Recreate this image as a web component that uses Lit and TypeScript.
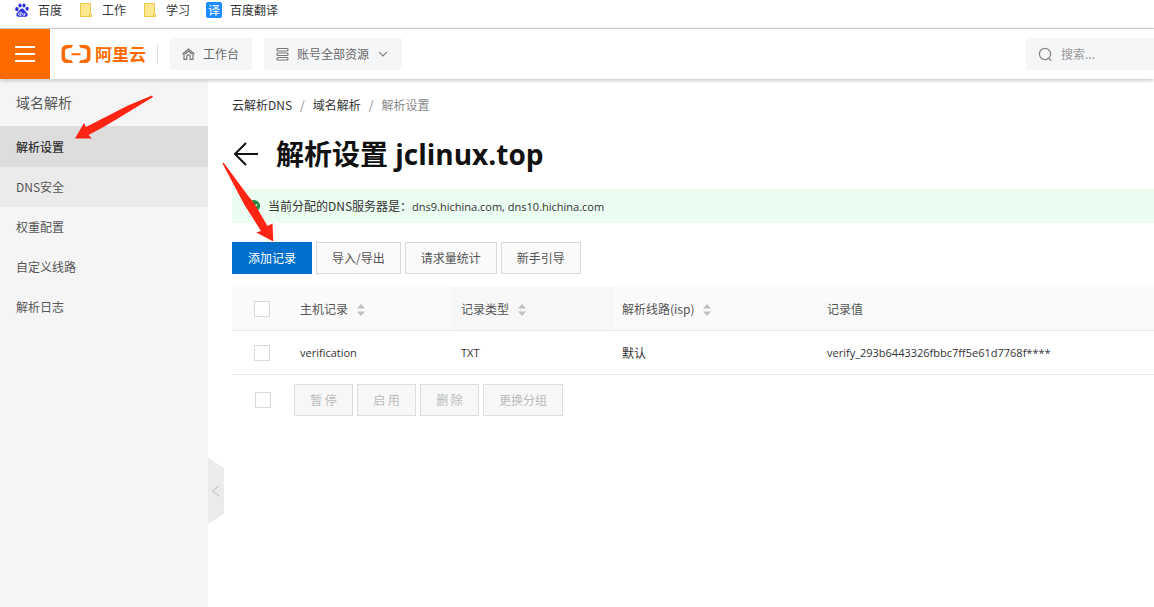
import { LitElement, html, css, svg } from "lit";
import { customElement, property } from "lit/decorators.js";

const pawIcon = html`<svg class="icon16" viewBox="0 0 16 16" fill="#2a2fe0" aria-hidden="true">
  <ellipse cx="2.9" cy="7.2" rx="1.7" ry="2.1" />
  <ellipse cx="6" cy="3.5" rx="1.6" ry="2.1" />
  <ellipse cx="10" cy="3.5" rx="1.6" ry="2.1" />
  <ellipse cx="13.1" cy="6.8" rx="1.6" ry="2" />
  <path d="M8 6.6c1.7 0 2.2 1.6 3.3 2.6 1.5 1.3 2.6 2.1 2.3 3.8-.3 1.6-1.7 2-3.1 1.8-1.7-.2-3.300-.2-5 0-1.400.2-2.800-.2-3.100-1.800-.3-1.700.8-2.500 2.300-3.800C5.800 8.200 6.300 6.600 8 6.600z" />
  <path d="M7 9.600v3.700H5.600a1 1 0 0 1 0-2.300H7M8.800 10.900v1.700q0 .7.7.7h1.300v-2.400" fill="none" stroke="#fff" stroke-width=".9" />
</svg>`;

const folderIcon = html`<svg class="icon16" viewBox="0 0 16 16" aria-hidden="true">
  <path d="M2.500 1.500h10v10.500l1 .5v2h-11z" fill="#ffe78f" stroke="#ecc94b" />
  <path d="M11.500 14.500v-2.500h1.500" fill="none" stroke="#ecc94b" />
</svg>`;

const sortIcon = svg`<svg class="sort" viewBox="0 0 8 14" fill="#bfbfbf" aria-hidden="true">
  <path d="M0 5.500 4 1l4 4.500zM0 8.500 4 13l4-4.500z" />
</svg>`;

@customElement("bookmark-bar")
class BookmarkBar extends LitElement {
  static styles = css`
    :host { display: flex; gap: 16px; align-items: center; height: 20px; padding: 0 14px 8px; border-bottom: 1px solid #d9d9d9; background: #fff; }
    .mark { display: flex; gap: 8px; align-items: center; color: #333; text-decoration: none; font-size: 12px; line-height: 20px; }
    .icon16 { width: 16px; height: 16px; display: block; }
    .badge { width: 16px; height: 16px; border-radius: 2px; background: #1a8cff; color: #fff; font-size: 12px; line-height: 16px; text-align: center; }
  `;
  render() {
    return html`
      <a class="mark" href="#">${pawIcon}百度</a>
      <a class="mark" href="#">${folderIcon}工作</a>
      <a class="mark" href="#">${folderIcon}学习</a>
      <a class="mark" href="#"><span class="badge">译</span>百度翻译</a>
    `;
  }
}

@customElement("console-header")
class ConsoleHeader extends LitElement {
  static styles = css`
    :host { display: flex; align-items: center; height: 50px; background: #fff; box-shadow: 0 1px 4px rgba(0, 0, 0, 0.28); position: relative; z-index: 2; }
    button { font: inherit; border: 0; padding: 0; margin: 0; cursor: pointer; }
    .menu { display: flex; align-items: center; justify-content: center; width: 50px; height: 50px; background: #ff6a00; }
    .menu svg { width: 20px; height: 16px; }
    .logo { display: flex; align-items: center; gap: 4px; margin-left: 11px; color: #ff6a00; text-decoration: none; font-size: 17px; font-weight: 700; line-height: 20px; }
    .logo svg { width: 30px; height: 18px; }
    .rule { width: 1px; height: 18px; margin: 0 12px 0 11px; background: #ddd; }
    .tool { display: flex; align-items: center; gap: 8px; height: 32px; padding: 0 13px 0 12px; margin-right: 12px; border-radius: 2px; background: #f4f6f8; color: #666; font-size: 12px; line-height: 20px; }
    .tool svg { width: 13px; height: 14px; fill: none; stroke: #777; }
    .tool .caret { width: 12px; }
    .search { display: flex; align-items: center; gap: 8px; box-sizing: border-box; width: 128px; height: 32px; margin-left: auto; padding-left: 12px; background: #f4f6f8; }
    .search svg { flex: none; width: 15px; height: 15px; fill: none; stroke: #888; }
    .search input { min-width: 0; width: 100%; border: 0; padding: 0; outline: 0; background: none; font: inherit; font-size: 12px; line-height: 20px; color: #333; }
    .search input::placeholder { color: #999; opacity: 1; }
  `;
  render() {
    return html`
      <button class="menu" aria-label="菜单">
        <svg viewBox="0 0 20 16" stroke="#fff" stroke-width="2"><path d="M0 1h20M0 8h20M0 15h20" /></svg>
      </button>
      <a class="logo" href="#">
        <svg viewBox="0 0 30 18" fill="#ff6a00" aria-hidden="true">
          <path d="M12 0 10.800 2.500 5.500 3.800Q4 4.200 4 6v6q0 1.800 1.500 2.200L10.800 15.500 12 18H6q-5.500 0-5.500-6V6Q.5 0 6 0zM18 0l1.200 2.500 5.300 1.300Q26 4.200 26 6v6q0 1.800-1.500 2.200L19.200 15.500 18 18h6q5.500 0 5.500-6V6q0-6-5.500-6zM10.500 8.200h9v2h-9z" />
        </svg>
        <span>阿里云</span>
      </a>
      <span class="rule"></span>
      <button class="tool">
        <svg viewBox="0 0 13 14" stroke-width="1.200"><path d="M.6 7 6.500 2l5.900 5M2 6v6.400h2.800V9.500a1.700 1.700 0 0 1 3.400 0v2.900H11V6M3 7l3.500-3L10 7" /></svg>
        工作台
      </button>
      <button class="tool">
        <svg viewBox="0 0 13 14" stroke-width="1.200"><rect x="1" y="1.500" width="11" height="2.500" rx="1" /><rect x="1" y="6" width="11" height="2.500" rx="1" /><rect x="1" y="10.500" width="11" height="2.500" rx="1" /></svg>
        账号全部资源
        <svg class="caret" viewBox="0 0 13 14" stroke-width="1.300"><path d="M2.500 5 6.500 9l4-4" /></svg>
      </button>
      <label class="search">
        <svg viewBox="0 0 15 15" stroke-width="1.300"><circle cx="7" cy="7" r="5.600" /><path d="m10.500 11 2.800 2.800" /></svg>
        <input type="search" aria-label="搜索" placeholder="搜索..." />
      </label>
    `;
  }
}

@customElement("side-nav")
class SideNav extends LitElement {
  static styles = css`
    :host { display: block; width: 208px; flex: none; background: #f5f5f5; position: relative; }
    .title { margin: 0; height: 46px; padding-left: 16px; font-size: 14px; line-height: 44px; font-weight: 400; color: #555; }
    .item { display: block; height: 40px; padding-left: 16px; font-size: 12px; line-height: 40px; color: #555; text-decoration: none; }
    .current { padding-top: 1px; background: #ddd; color: #333; font-weight: 500; }
    .hover { background: #ebebeb; }
    .fold { position: absolute; left: 100%; top: 378px; width: 16px; height: 66px; border: 0; padding: 0; background: #ebebeb; clip-path: polygon(0 0, 100% 10px, 100% 56px, 0 100%); }
    .fold svg { display: block; width: 16px; height: 16px; fill: none; stroke: #bbb; }
  `;
  render() {
    const items = ["解析设置", "DNS安全", "权重配置", "自定义线路", "解析日志"];
    return html`
      <h2 class="title">域名解析</h2>
      <nav>
        ${items.map((t, i) => html`<a class="item ${i === 0 ? "current" : i === 1 ? "hover" : ""}" href="#">${t}</a>`)}
      </nav>
      <button class="fold" aria-label="收起"><svg viewBox="0 0 16 16"><path d="M11 3 4.500 8l6.500 5" /></svg></button>
    `;
  }
}

@customElement("record-table")
class RecordTable extends LitElement {
  @property({ attribute: false }) rows = [["verification", "TXT", "默认", "verify_293b6443326fbbc7ff5e61d7768f****"]];
  static styles = css`
    :host { display: block; }
    .grid { width: 100%; table-layout: fixed; border-collapse: separate; border-spacing: 0; font-size: 12px; line-height: 20px; }
    .pick { width: 60px; }
    .mid { width: 161px; }
    .wide { width: 205px; }
    th, td { box-sizing: border-box; height: 44px; padding: 0 8px; border-bottom: 1px solid #e3e9ef; text-align: left; font-weight: 400; color: #333; white-space: nowrap; }
    th { background: #fafafa; color: #555; }
    th:nth-child(3) { background: #f7f7f7; }
    .latin { font-family: "Open Sans", sans-serif; font-size: 11px; }
    .check { padding: 0; text-align: center; }
    .sort { width: 8px; height: 14px; margin-left: 9px; vertical-align: middle; }
    input { appearance: none; display: block; box-sizing: border-box; width: 16px; height: 16px; margin: 0; border: 1px solid #d9d9d9; background: #fff; }
    .check input { margin: 0 auto; }
    .batch { display: flex; align-items: center; gap: 4px; padding: 9px 0 0 23px; }
    .batch input { margin-right: 19px; }
    button { min-width: 59px; height: 32px; padding: 0 15px; border: 1px solid #dedede; background: #f7f7f7; color: #bbb; font: inherit; font-size: 12px; line-height: 20px; }
  `;
  render() {
    return html`
      <table class="grid">
        <colgroup><col class="pick" /><col class="mid" /><col class="mid" /><col class="wide" /><col /></colgroup>
        <thead>
          <tr>
            <th class="check"><input type="checkbox" aria-label="全选" /></th>
            <th>主机记录${sortIcon}</th>
            <th>记录类型${sortIcon}</th>
            <th>解析线路(isp)${sortIcon}</th>
            <th>记录值</th>
          </tr>
        </thead>
        <tbody>
          ${this.rows.map((r) => html`<tr>
            <td class="check"><input type="checkbox" aria-label=${r[0]} /></td>
            ${r.map((c) => html`<td class=${/^[\x20-\x7e]+$/.test(c) ? "latin" : "han"}>${c}</td>`)}
          </tr>`)}
        </tbody>
      </table>
      <div class="batch">
        <input type="checkbox" aria-label="批量选择" />
        ${["暂 停", "启 用", "删 除", "更换分组"].map((t) => html`<button disabled>${t}</button>`)}
      </div>
    `;
  }
}

@customElement("app-root")
class AppRoot extends LitElement {
  static styles = css`
    :host { display: flex; flex-direction: column; min-height: 100vh; position: relative; overflow: hidden; background: #fff; font-family: "Noto Sans CJK SC", sans-serif; color: #333; }
    .body { display: flex; flex: 1; padding-top: 1px; }
    .main { flex: 1; min-width: 0; padding: 15px 0 0 24px; }
    .crumbs { display: flex; gap: 8px; font-size: 12px; line-height: 20px; color: #888; }
    .crumbs a { color: #333; text-decoration: none; }
    .head { display: flex; align-items: center; gap: 16px; margin: 19px 0 15px; }
    .back { display: flex; align-items: center; width: 28px; height: 40px; border: 0; padding: 0; background: none; }
    .back svg { display: block; width: 28px; height: 28px; fill: none; stroke: #111; stroke-width: 2; }
    h1 { margin: 0; font-family: "Open Sans", "Noto Sans CJK SC", sans-serif; font-size: 28px; line-height: 40px; font-weight: 700; color: #111; }
    .notice { display: flex; align-items: center; gap: 8px; height: 34px; padding-left: 16px; background: #ebfcf1; font-size: 12px; line-height: 20px; }
    .notice svg { width: 12px; height: 12px; }
    .latin { font-family: "Open Sans", sans-serif; font-size: 11px; }
    .actions { display: flex; gap: 4px; margin: 19px 0 13px; }
    .actions button { height: 32px; padding: 0 15px; border: 1px solid #d9d9d9; background: #fafafa; color: #555; font: inherit; font-size: 12px; line-height: 20px; }
    .actions .primary { border-color: #0070cc; background: #0070cc; color: #fff; }
    .pointer { position: absolute; z-index: 3; fill: #ff2413; pointer-events: none; }
    .one { left: 74px; top: 94px; width: 80px; height: 46px; }
    .two { left: 222px; top: 162px; width: 54px; height: 80px; }
  `;
  render() {
    return html`
      <bookmark-bar></bookmark-bar>
      <console-header></console-header>
      <div class="body">
        <side-nav></side-nav>
        <main class="main">
          <nav class="crumbs"><a href="#">云解析DNS</a><span>/</span><a href="#">域名解析</a><span>/</span><span>解析设置</span></nav>
          <div class="head">
            <button class="back" aria-label="返回"><svg viewBox="0 0 28 28"><path d="M26 14H3M14 3 3 14l11 11" /></svg></button>
            <h1>解析设置 jclinux.top</h1>
          </div>
          <div class="notice">
            <svg viewBox="0 0 12 12" aria-hidden="true"><circle cx="6" cy="6" r="6" fill="#1e8e3e" /><path d="m3 6 2.300 2.300L9 4.500" fill="none" stroke="#fff" stroke-width="1.200" /></svg>
            <span>当前分配的DNS服务器是：<span class="latin">dns9.hichina.com, dns10.hichina.com</span></span>
          </div>
          <div class="actions">
            <button class="primary">添加记录</button>
            <button>导入/导出</button>
            <button>请求量统计</button>
            <button>新手引导</button>
          </div>
          <record-table></record-table>
        </main>
      </div>
      <svg class="pointer one" viewBox="74 94 80 46" aria-hidden="true"><path d="M75 138.500 84 123l2 4L128 105.500 152 95.500l1 1.500-36 22-13.500 8-15 8 3.500 3.500z" /></svg>
      <svg class="pointer two" viewBox="222 162 54 80" aria-hidden="true"><path d="M273.300 241.500 256.300 232.500l4.700-1.500L244.500 205 222.500 163.500l1.200-.8L247.500 195l6.500 8 13.500 23 5-2.500z" /></svg>
    `;
  }
}
